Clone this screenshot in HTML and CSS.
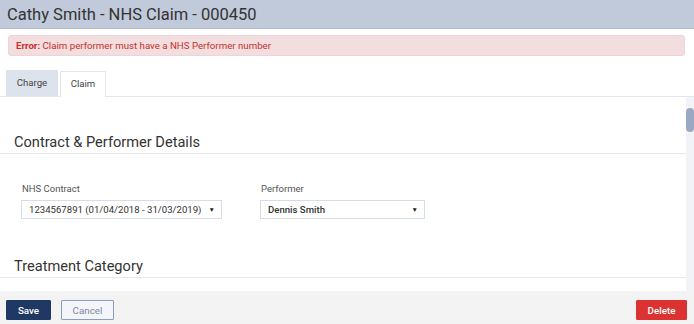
FILE: index.html
```html
<!DOCTYPE html>
<html>
  <head>
    <title>NHS Claim</title>
    <link rel="stylesheet" href="styles.css">
  </head>
  <body>
    <div class="page">
      <div class="header">Cathy Smith - NHS Claim - 000450</div>
      <div class="error"><b>Error:</b> Claim performer must have a NHS Performer number</div>
      <div class="tabs">
        <div class="tab">Charge</div>
        <div class="tab active">Claim</div>
      </div>
      <div class="content">
        <div class="scroll">
          <div class="section-title">Contract &amp; Performer Details</div>
          <div class="fields">
            <div class="field">
              <label>NHS Contract</label>
              <div class="select wide">1234567891 (01/04/2018 - 31/03/2019)<span class="arrow">&#9660;</span></div>
            </div>
            <div class="field">
              <label>Performer</label>
              <div class="select perf"><span class="bold">Dennis Smith</span><span class="arrow">&#9660;</span></div>
            </div>
          </div>
          <div class="section-title second">Treatment Category</div>
        </div>
        <div class="scrollbar"><div class="thumb"></div></div>
      </div>
      <div class="footer">
        <button class="btn save">Save</button>
        <button class="btn cancel">Cancel</button>
        <span class="spacer"></span>
        <button class="btn delete">Delete</button>
      </div>
    </div>
  </body>
</html>
```
FILE: styles.css
```css
body {
  margin: 0;
  font-family: Roboto, "Liberation Sans", sans-serif;
  color: #333333;
  background: #ffffff;
}
.page {
  height: 324px;
  display: flex;
  flex-direction: column;
  overflow: hidden;
}
.header {
  height: 29px;
  background: #c1cadb;
  font-size: 16.5px;
  line-height: 29px;
  padding-left: 7px;
  color: #333333;
  border-bottom: 1px solid #b3bdd0;
  box-sizing: border-box;
}
.error {
  margin: 6px 9px 0 8px;
  height: 21px;
  line-height: 20px;
  background: #f2dede;
  border: 1px solid #eed3d7;
  border-radius: 3px;
  color: #c9302c;
  font-size: 9.7px;
  padding-left: 7px;
  box-sizing: border-box;
}
.error b {
  font-weight: bold;
}
.tabs {
  display: flex;
  gap: 2px;
  margin-top: 14px;
  padding-left: 6px;
  border-bottom: 1px solid #e3e6ee;
  height: 26px;
}
.tab {
  width: 52px;
  height: 26px;
  line-height: 26px;
  text-align: center;
  font-size: 9.6px;
  color: #444444;
  background: #dde3ec;
  box-sizing: border-box;
}
.tab.active {
  width: 46px;
  margin-top: 1px;
  height: 26px;
  background: #ffffff;
  border: 1px solid #e3e6ee;
  border-bottom: none;
  line-height: 24px;
}
.content {
  flex: 1;
  display: flex;
  min-height: 0;
}
.scroll {
  flex: 1;
  overflow: hidden;
}
.section-title {
  font-size: 14.6px;
  color: #333333;
  padding: 37px 0 2px 14px;
  border-bottom: 1px solid #e8e8e8;
  line-height: 17px;
}
.section-title.second {
  padding-top: 39px;
}
.fields {
  display: flex;
  padding: 29px 0 0 21px;
  gap: 38px;
}
.field label {
  display: block;
  font-size: 9.5px;
  line-height: 11px;
  color: #555555;
  margin: 0 0 6px 1px;
}
.select {
  display: flex;
  align-items: center;
  height: 19px;
  border: 1px solid #d6dde8;
  font-size: 9.6px;
  padding: 0 6px 0 7px;
  box-sizing: border-box;
  color: #333333;
  white-space: nowrap;
}
.select.wide {
  width: 201px;
}
.select.perf {
  width: 165px;
}
.select .arrow {
  margin-left: auto;
  font-size: 6.5px;
  color: #222222;
}
.bold {
  font-weight: 500;
}
.scrollbar {
  width: 8px;
  background: #f1f3f7;
  padding-top: 11px;
}
.thumb {
  height: 24px;
  background: #9ba8c3;
  border-radius: 4px;
}
.footer {
  height: 33px;
  background: #f3f3f3;
  display: flex;
  align-items: flex-start;
  padding: 9px 7px 0 6px;
  gap: 10px;
  box-sizing: border-box;
}
.spacer {
  flex: 1;
}
.btn {
  font-family: Roboto, "Liberation Sans", sans-serif;
  font-size: 9.8px;
  height: 20px;
  border-radius: 1px;
  padding: 0;
  cursor: pointer;
}
.save {
  width: 45px;
  background: #1f3864;
  border: 1px solid #1f3864;
  color: #ffffff;
  font-weight: 500;
}
.cancel {
  width: 53px;
  background: #f3f5f9;
  border: 1px solid #8a9dbb;
  color: #7c8ba3;
}
.delete {
  width: 51px;
  background: #dc3232;
  border: 1px solid #dc3232;
  color: #ffffff;
  font-weight: 500;
}
```
